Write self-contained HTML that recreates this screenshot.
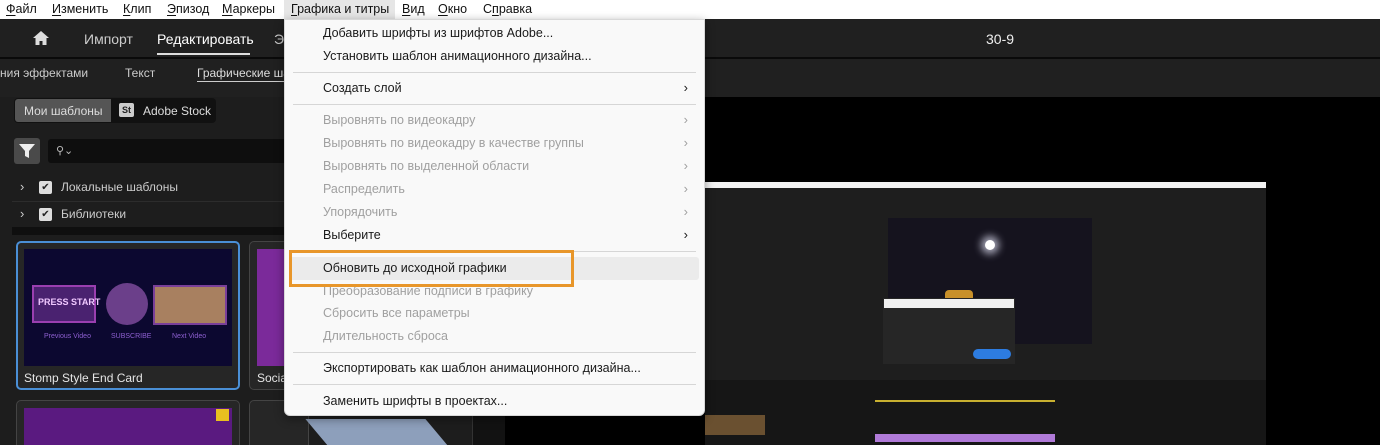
<!DOCTYPE html>
<html><head><meta charset="utf-8"><style>
*{margin:0;padding:0;box-sizing:border-box}
html,body{width:1380px;height:445px;overflow:hidden}
body{background:#000;font-family:"Liberation Sans","Noto Sans CJK SC",sans-serif;position:relative}
.a{position:absolute}
.menubar{left:0;top:0;width:1380px;height:19px;background:#fff;font-size:12.5px;color:#111}
.menubar span{position:absolute;top:2px}
.menubar u{text-decoration-thickness:1px;text-underline-offset:2px}
.hdr{left:0;top:19px;width:1380px;height:38px;background:#202020;color:#ccc;font-size:14px}
.sub{left:0;top:59px;width:1380px;height:38px;background:#202020;color:#ccc;font-size:12px}
.left{left:0;top:97px;width:472px;height:348px;background:#1d1d1d;color:#ccc;font-size:12px;overflow:hidden}
.menu{left:284px;top:19px;width:421px;height:397px;background:#f9f9f9;border:1px solid #d8d8d8;border-radius:0 0 6px 6px;box-shadow:0 3px 10px rgba(0,0,0,.4);font-size:12.5px;color:#1a1a1a}
.mi{position:absolute;left:38px}
.dis{color:#a0a0a0}
.sep{position:absolute;left:8px;right:8px;height:1px;background:#d6d6d6}
.arr{position:absolute;right:16px;font-size:13px}
</style></head><body>
<div class="a menubar">
<div class="a" style="left:284px;top:0;width:111px;height:19px;background:#e6e6e6"></div>
<span style="left:6px"><u>Ф</u>айл</span><span style="left:52px"><u>И</u>зменить</span><span style="left:123px"><u>К</u>лип</span><span style="left:167px"><u>Э</u>пизод</span><span style="left:222px"><u>М</u>аркеры</span><span style="left:291px"><u>Г</u>рафика и титры</span><span style="left:402px"><u>В</u>ид</span><span style="left:438px"><u>О</u>кно</span><span style="left:483px">С<u>п</u>равка</span>
</div>
<div class="a hdr">
<svg class="a" style="left:32px;top:11px" width="18" height="16" viewBox="0 0 18 16"><path d="M9 1L1 8h2.5v7h4v-4h3v4h4V8H17z" fill="#ddd"/></svg>
<div class="a" style="left:84px;top:12px">Импорт</div>
<div class="a" style="left:157px;top:12px;color:#fff">Редактировать</div>
<div class="a" style="left:157px;top:34px;width:93px;height:2px;background:#ddd"></div>
<div class="a" style="left:274px;top:12px">Э</div>
<div class="a" style="left:986px;top:12px;color:#eee">30-9</div>
</div>
<div class="a" style="left:0;top:57px;width:1380px;height:2px;background:#0a0a0a"></div>
<div class="a sub">
<div class="a" style="left:0;top:7px">ния эффектами</div>
<div class="a" style="left:125px;top:7px">Текст</div>
<div class="a" style="left:197px;top:7px;color:#ddd">Графические ша</div>
<div class="a" style="left:197px;top:22px;width:90px;height:1px;background:#ccc"></div>
</div>
<div class="a left">
<div class="a" style="left:14px;top:1px;width:202px;height:25px;background:#111;border-radius:4px"></div>
<div class="a" style="left:15px;top:2px;width:96px;height:23px;background:#555;border-radius:3px 0 0 3px"></div>
<div class="a" style="left:24px;top:7px;color:#ddd">Мои шаблоны</div>
<div class="a" style="left:119px;top:6px;width:15px;height:14px;background:#ccc;border-radius:2px;color:#222;font-size:9px;font-weight:bold;text-align:center;line-height:14px">St</div>
<div class="a" style="left:143px;top:7px;color:#ddd">Adobe Stock</div>
<div class="a" style="left:14px;top:41px;width:26px;height:26px;background:#4a4a4a;border-radius:3px"></div>
<svg class="a" style="left:18px;top:46px" width="18" height="16" viewBox="0 0 18 16"><path d="M1 1h16l-6 7v7l-4-2V8z" fill="#eee"/></svg>
<div class="a" style="left:48px;top:42px;width:424px;height:24px;background:#0e0e0e;border-radius:3px"></div>
<div class="a" style="left:56px;top:47px;color:#bbb;font-size:11px">⚲⌄</div>
<div class="a" style="left:20px;top:82px;font-size:13px">›</div>
<div class="a" style="left:39px;top:84px;width:13px;height:13px;background:#ddd;border-radius:2px;color:#222;font-size:10px;line-height:13px;text-align:center">✔</div>
<div class="a" style="left:61px;top:83px">Локальные шаблоны</div>
<div class="a" style="left:12px;top:104px;width:460px;height:1px;background:#2c2c2c"></div>
<div class="a" style="left:20px;top:109px;font-size:13px">›</div>
<div class="a" style="left:39px;top:111px;width:13px;height:13px;background:#ddd;border-radius:2px;color:#222;font-size:10px;line-height:13px;text-align:center">✔</div>
<div class="a" style="left:61px;top:110px">Библиотеки</div>
<div class="a" style="left:12px;top:130px;width:460px;height:8px;background:#0f0f0f"></div>
<div class="a" style="left:16px;top:144px;width:224px;height:149px;border:2px solid #4a8fd6;border-radius:5px;background:#262626"></div>
<div class="a" style="left:24px;top:152px;width:208px;height:117px;background:#0c0830"></div>
<div class="a" style="left:32px;top:188px;width:64px;height:38px;background:#4a2270;border:2px solid #9a3fb0"></div>
<div class="a" style="left:38px;top:200px;color:#f0c8ff;font-size:9px;font-weight:bold">PRESS START</div>
<div class="a" style="left:106px;top:186px;width:42px;height:42px;border-radius:50%;background:#6b3f8a"></div>
<div class="a" style="left:153px;top:188px;width:74px;height:40px;background:#a88060;border:2px solid #7a3f9a"></div>
<div class="a" style="left:44px;top:236px;color:#8d5fd0;font-size:7px">Previous Video</div>
<div class="a" style="left:111px;top:236px;color:#8d5fd0;font-size:7px">SUBSCRIBE</div>
<div class="a" style="left:172px;top:236px;color:#8d5fd0;font-size:7px">Next Video</div>
<div class="a" style="left:24px;top:274px;color:#e6e6e6;font-size:12px">Stomp Style End Card</div>
<div class="a" style="left:249px;top:144px;width:60px;height:149px;border:1px solid #444;border-radius:5px;background:#262626"></div>
<div class="a" style="left:257px;top:152px;width:30px;height:117px;background:#7b2a9a"></div>
<div class="a" style="left:257px;top:274px;color:#e6e6e6;font-size:12px">Social</div>
<div class="a" style="left:16px;top:303px;width:224px;height:60px;border:1px solid #444;border-radius:5px;background:#262626"></div>
<div class="a" style="left:24px;top:311px;width:208px;height:50px;background:#5a1a80"></div>
<div class="a" style="left:216px;top:312px;width:13px;height:12px;background:#e8c020"></div>
<div class="a" style="left:249px;top:303px;width:60px;height:60px;border:1px solid #444;border-radius:5px;background:#262626"></div>
<div class="a" style="left:318px;top:322px;width:120px;height:30px;background:#8d9fbb;transform:skewX(40deg)"></div>
</div>
<div class="a" style="left:472px;top:97px;width:33px;height:348px;background:#121212;border-left:1px solid #333"></div>
<div class="a" style="left:705px;top:182px;width:561px;height:263px;background:#1e1e1e;border-top:6px solid #f2f2f2"></div>
<div class="a" style="left:888px;top:218px;width:204px;height:126px;background:#15131e"></div>
<div class="a" style="left:985px;top:240px;width:10px;height:10px;border-radius:50%;background:#fff;box-shadow:0 0 8px 4px #aab"></div>
<div class="a" style="left:945px;top:290px;width:28px;height:12px;background:#c8902a;border-radius:4px 4px 0 0"></div>
<div class="a" style="left:883px;top:298px;width:132px;height:66px;background:#262626"></div>
<div class="a" style="left:884px;top:299px;width:130px;height:9px;background:#f0f0f0"></div>
<div class="a" style="left:973px;top:349px;width:38px;height:10px;background:#2d7ce0;border-radius:5px"></div>
<div class="a" style="left:705px;top:380px;width:561px;height:65px;background:#161616"></div>
<div class="a" style="left:875px;top:434px;width:180px;height:8px;background:#b07ad8"></div>
<div class="a" style="left:875px;top:400px;width:180px;height:2px;background:#c8b030"></div>
<div class="a" style="left:705px;top:415px;width:60px;height:20px;background:#6a5030"></div>
<div class="a menu">
<div class="mi" style="top:6px">Добавить шрифты из шрифтов Adobe...</div>
<div class="mi" style="top:29px">Установить шаблон анимационного дизайна...</div>
<div class="sep" style="top:52px"></div>
<div class="mi" style="top:61px">Создать слой</div><div class="arr" style="top:60px">›</div>
<div class="sep" style="top:84px"></div>
<div class="mi dis" style="top:93px">Выровнять по видеокадру</div><div class="arr dis" style="top:92px">›</div>
<div class="mi dis" style="top:116px">Выровнять по видеокадру в качестве группы</div><div class="arr dis" style="top:115px">›</div>
<div class="mi dis" style="top:139px">Выровнять по выделенной области</div><div class="arr dis" style="top:138px">›</div>
<div class="mi dis" style="top:162px">Распределить</div><div class="arr dis" style="top:161px">›</div>
<div class="mi dis" style="top:185px">Упорядочить</div><div class="arr dis" style="top:184px">›</div>
<div class="mi" style="top:208px">Выберите</div><div class="arr" style="top:207px">›</div>
<div class="sep" style="top:231px"></div>
<div class="a" style="left:4px;top:237px;width:410px;height:23px;background:#ebebeb;border-radius:3px"></div>
<div class="mi" style="top:241px">Обновить до исходной графики</div>
<div class="mi dis" style="top:264px">Преобразование подписи в графику</div>
<div class="mi dis" style="top:286px">Сбросить все параметры</div>
<div class="mi dis" style="top:309px">Длительность сброса</div>
<div class="sep" style="top:332px"></div>
<div class="mi" style="top:341px">Экспортировать как шаблон анимационного дизайна...</div>
<div class="sep" style="top:364px"></div>
<div class="mi" style="top:374px">Заменить шрифты в проектах...</div>
</div>
<div class="a" style="left:289px;top:250px;width:285px;height:37px;border:3px solid #e8962a"></div>
</body></html>
